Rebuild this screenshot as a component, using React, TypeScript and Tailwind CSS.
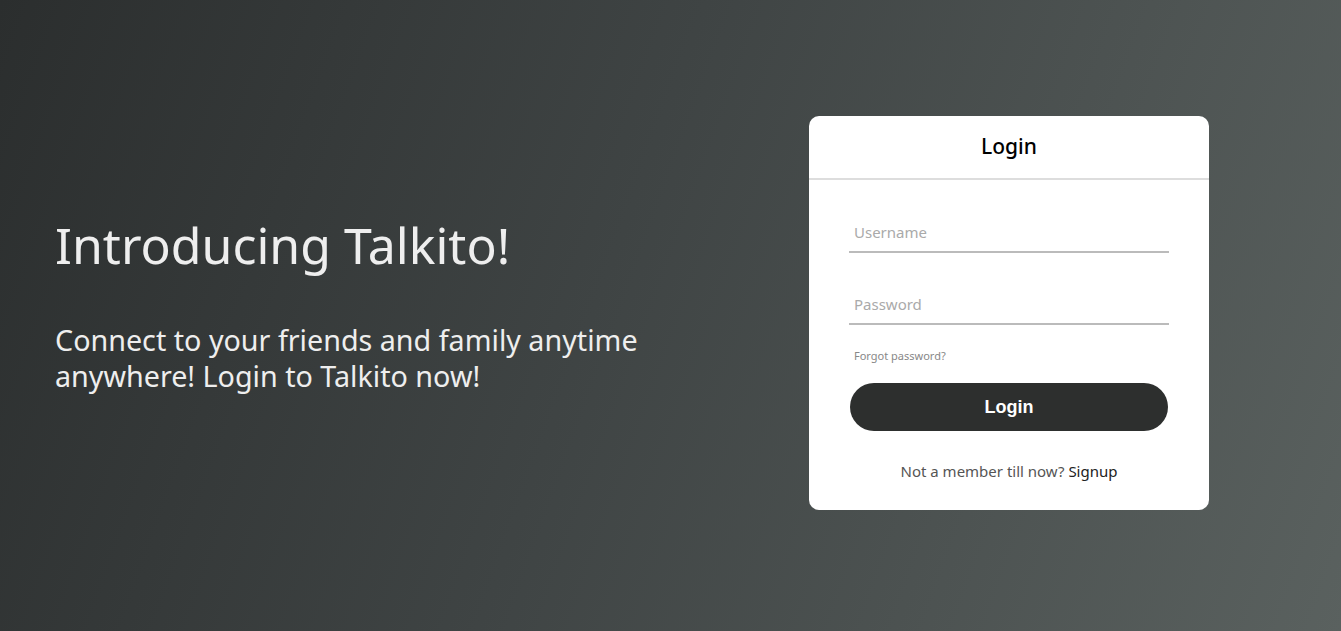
import React from "react";

export default function App() {
  return (
    <div
      className="flex h-screen w-full items-center justify-between bg-[linear-gradient(110deg,#2b2e2e_0%,#3f4444_45%,#5a615f_100%)] pl-[55px] pr-[132px]"
      style={{ fontFamily: '"Noto Sans", "Open Sans", sans-serif' }}
    >
      {/* Intro */}
      <div className="mb-[22px] w-[640px] text-[#eeeeee]">
        <h1 className="text-[50px] leading-[58px] font-normal">Introducing Talkito!</h1>
        <p className="mt-[48px] text-[28.7px] leading-[36px]">
          Connect to your friends and family anytime anywhere! Login to Talkito now!
        </p>
      </div>

      {/* Login card */}
      <div className="mb-[5px] w-[400px] rounded-[10px] bg-white">
        <div className="flex h-[64px] items-center justify-center border-b-2 border-[#dddddd]">
          <h2 className="text-[21px] font-medium text-black">Login</h2>
        </div>
        <form className="px-[40px] pt-[33px] pb-[29px]" onSubmit={(e) => e.preventDefault()}>
          <input
            type="text"
            placeholder="Username"
            className="block h-[40px] w-full border-b-2 border-[#bbbbbb] px-[5px] text-[15px] text-[#333] outline-none placeholder:text-[#aaaaaa]"
          />
          <input
            type="password"
            placeholder="Password"
            className="mt-[32px] block h-[40px] w-full border-b-2 border-[#bbbbbb] px-[5px] text-[15px] text-[#333] outline-none placeholder:text-[#aaaaaa]"
          />
          <a href="#" className="mt-[24px] ml-[5px] block text-[11px] leading-[14px] text-[#888888]">
            Forgot password?
          </a>
          <button
            type="submit"
            className="mx-auto mt-[20px] block h-[48px] w-[318px] rounded-full bg-[#2d2f2e] text-[18px] font-bold text-white"
            style={{ fontFamily: '"Liberation Sans", Arial, sans-serif' }}
          >
            Login
          </button>
          <p className="mt-[30px] text-center text-[15px] leading-[20px] text-[#555555]">
            Not a member till now?{" "}
            <a href="#" className="text-[#222222]">
              Signup
            </a>
          </p>
        </form>
      </div>
    </div>
  );
}
